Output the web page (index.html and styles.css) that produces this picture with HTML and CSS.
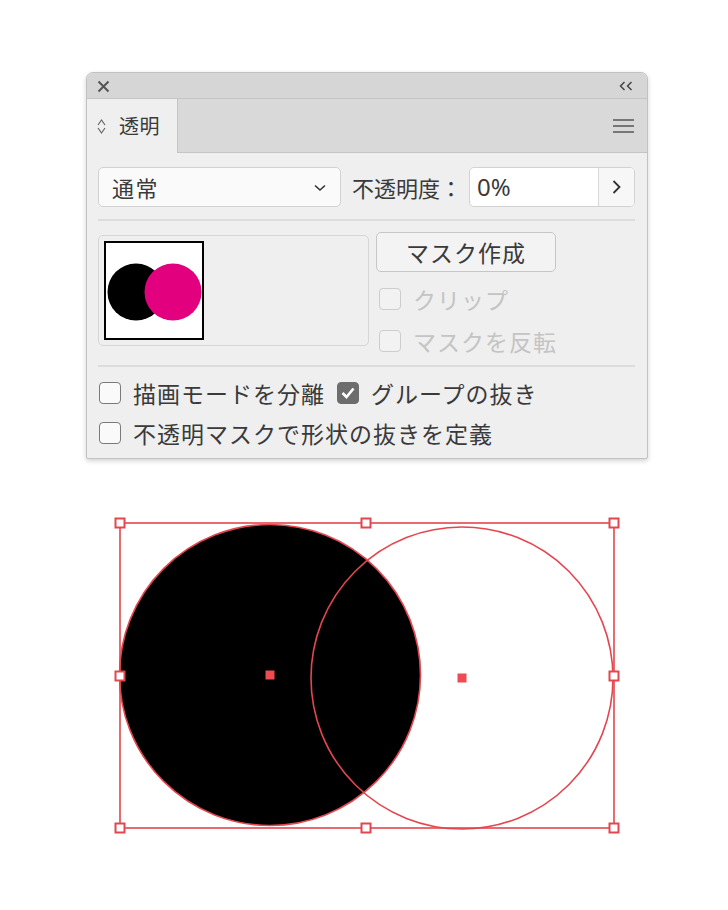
FILE: index.html
```html
<!DOCTYPE html>
<html lang="ja">
<head>
<meta charset="utf-8">
<title>透明</title>
<link rel="stylesheet" href="styles.css">
</head>
<body>
<div class="panel">
  <div class="titlebar">
    <svg class="close" width="13" height="13" viewBox="0 0 13 13"><path d="M1.5 1.5 L11.5 11.5 M11.5 1.5 L1.5 11.5" stroke="#555" stroke-width="2" fill="none"/></svg>
    <svg class="collapse" width="14" height="10" viewBox="0 0 14 10"><path d="M5.5 1 L1.5 5 L5.5 9 M12.5 1 L8.5 5 L12.5 9" stroke="#444" stroke-width="1.5" fill="none"/></svg>
  </div>
  <div class="tabrow">
    <div class="tab">
      <svg class="updown" width="9" height="17" viewBox="0 0 9 17"><path d="M1 7 L4.5 2 L8 7 M1 10 L4.5 15 L8 10" stroke="#666" stroke-width="1.2" fill="none"/></svg>
      <span class="tab-label">透明</span>
    </div>
    <div class="tab-fill">
      <svg class="menu" width="21" height="14" viewBox="0 0 21 14"><path d="M0 1 H21 M0 7 H21 M0 13 H21" stroke="#777" stroke-width="2" fill="none"/></svg>
    </div>
  </div>
  <div class="content">
    <div class="row-blend">
      <div class="select">
        <span>通常</span>
        <svg width="12" height="8" viewBox="0 0 12 8"><path d="M1 1.5 L6 6 L11 1.5" stroke="#333" stroke-width="1.6" fill="none"/></svg>
      </div>
      <span class="opacity-label">不透明度：</span>
      <div class="input">
        <span class="value">0%</span>
        <div class="stepper"><svg width="9" height="14" viewBox="0 0 9 14"><path d="M1.5 1 L7.5 7 L1.5 13" stroke="#333" stroke-width="1.8" fill="none"/></svg></div>
      </div>
    </div>
    <div class="sep"></div>
    <div class="row-mask">
      <div class="preview">
        <div class="thumb">
          <svg width="96" height="95" viewBox="0 0 96 95"><circle cx="30" cy="49" r="28.5" fill="#000"/><circle cx="67" cy="49" r="28.5" fill="#e2007f"/></svg>
        </div>
      </div>
      <div class="mask-side">
        <button class="btn">マスク作成</button>
        <label class="check disabled"><span class="box"></span>クリップ</label>
        <label class="check disabled"><span class="box"></span>マスクを反転</label>
      </div>
    </div>
    <div class="sep sep-low"></div>
    <div class="row-opts">
      <label class="check"><span class="box"></span>描画モードを分離</label>
      <label class="check"><span class="box checked"><svg width="14" height="12" viewBox="0 0 14 12"><path d="M1.5 6 L5.5 10 L12.5 1.5" stroke="#fff" stroke-width="2.6" fill="none"/></svg></span>グループの抜き</label>
    </div>
    <div class="row-opts">
      <label class="check"><span class="box"></span>不透明マスクで形状の抜きを定義</label>
    </div>
  </div>
</div>
<svg class="art" width="728" height="451" viewBox="0 459 728 451">
  <circle cx="270" cy="675" r="150.5" fill="#000" stroke="#e4464f" stroke-width="1.6"/>
  <circle cx="462" cy="678" r="151" fill="none" stroke="#e4464f" stroke-width="1.6"/>
  <rect x="120" y="523" width="494" height="305" fill="none" stroke="#e4464f" stroke-width="1.6"/>
  <g fill="#fff" stroke="#e4464f" stroke-width="2">
    <rect x="115.5" y="518.5" width="9" height="9"/>
    <rect x="361.5" y="518.5" width="9" height="9"/>
    <rect x="609.5" y="518.5" width="9" height="9"/>
    <rect x="115.5" y="671.5" width="9" height="9"/>
    <rect x="609.5" y="671.5" width="9" height="9"/>
    <rect x="115.5" y="823.5" width="9" height="9"/>
    <rect x="361.5" y="823.5" width="9" height="9"/>
    <rect x="609.5" y="823.5" width="9" height="9"/>
  </g>
  <g fill="#f04a52">
    <rect x="265.5" y="670.5" width="9" height="9"/>
    <rect x="457.5" y="673.5" width="9" height="9"/>
  </g>
</svg>
</body>
</html>
```
FILE: styles.css
```css
* { box-sizing: border-box; }
html, body { margin: 0; padding: 0; background: #fff; }
body {
  padding: 72px 0 0 0;
  font-family: "Noto Sans CJK JP", "Noto Sans", sans-serif;
  color: #3a3a3a;
}
.panel {
  margin-left: 86px;
  width: 562px;
  height: 387px;
  border: 1px solid #c2c2c2;
  border-radius: 7px 7px 2px 2px;
  background: #efefef;
  box-shadow: 0 2px 5px rgba(0,0,0,0.18);
  overflow: hidden;
}
.titlebar {
  height: 26px;
  background: #d6d6d6;
  border-bottom: 1px solid #c4c4c4;
  display: flex;
  align-items: center;
  justify-content: space-between;
  padding: 0 14px 0 10px;
}
.close { display: block; margin-top: 1px; }
.collapse { display: block; }
.tabrow {
  height: 54px;
  display: flex;
  background: #d9d9d9;
}
.tab {
  width: 91px;
  background: #efefef;
  border-right: 1px solid #c4c4c4;
  display: flex;
  align-items: center;
  padding-left: 10px;
  gap: 13px;
}
.updown { display: block; }
.tab-label { font-size: 20px; line-height: 1; letter-spacing: 0.5px; color: #3a3a3a; }
.tab-fill {
  flex: 1;
  border-bottom: 1px solid #c4c4c4;
  display: flex;
  align-items: center;
  justify-content: flex-end;
  padding-right: 13px;
}
.menu { display: block; }
.content { padding: 14px 12px 0 11px; }
.row-blend {
  display: flex;
  align-items: center;
  height: 40px;
}
.select {
  width: 243px;
  height: 40px;
  background: #fafafa;
  border: 1px solid #d2d2d2;
  border-radius: 5px;
  display: flex;
  align-items: center;
  justify-content: space-between;
  padding: 0 14px 0 13px;
  font-size: 22px;
}
.select span { letter-spacing: 1.5px; }
.select svg { display: block; margin-top: 2px; }
.opacity-label {
  margin-left: 11px;
  font-size: 22px;
  white-space: nowrap;
}
.input {
  margin-left: 7px;
  flex: 1;
  height: 40px;
  display: flex;
  border: 1px solid #d2d2d2;
  border-radius: 5px;
  background: #fff;
  overflow: hidden;
}
.value {
  flex: 1;
  font-family: "Noto Sans", sans-serif;
  font-size: 24px;
  line-height: 38px;
  padding-left: 7px;
  color: #3a3a3a;
}
.stepper {
  width: 36px;
  border-left: 1px solid #d8d8d8;
  background: #f7f7f7;
  display: flex;
  align-items: center;
  justify-content: center;
}
.sep {
  height: 2px;
  background: #dcdcdc;
  margin: 12px 0 11px 0;
}
.sep.sep-low { margin: 13px 0 6px 0; }
.row-mask {
  display: flex;
  gap: 7px;
  height: 120px;
}
.preview {
  margin-top: 3px;
  width: 271px;
  height: 111px;
  border: 1px solid #d6d6d6;
  border-radius: 5px;
  padding: 5px;
}
.thumb {
  width: 100px;
  height: 99px;
  border: 2px solid #000;
  background: #fff;
}
.thumb svg { display: block; }
.mask-side { display: flex; flex-direction: column; }
.btn {
  width: 180px;
  height: 40px;
  flex: none;
  border: 1.5px solid #c6c6c6;
  border-radius: 5px;
  background: #f3f3f3;
  font-family: "Noto Sans CJK JP", sans-serif;
  font-size: 23px;
  letter-spacing: 1px;
  color: #3a3a3a;
  padding: 0;
  margin-bottom: 6px;
}
.check {
  display: flex;
  align-items: center;
  gap: 12px;
  font-size: 23px;
  letter-spacing: 1px;
  height: 40px;
  white-space: nowrap;
}
.mask-side .check { margin-left: 3px; height: 42px; flex: none; }
.box {
  width: 22px;
  height: 22px;
  border: 1.6px solid #7a7a7a;
  border-radius: 4px;
  background: #fafafa;
  display: flex;
  align-items: center;
  justify-content: center;
  flex: none;
}
.box.checked { background: #6d6d6d; border-color: #6d6d6d; }
.box svg { display: block; }
.check.disabled { color: #c4c4c4; }
.check.disabled .box { border-color: #cdcdcd; background: #f2f2f2; }
.row-opts {
  display: flex;
  gap: 12px;
  margin-left: 1px;
}
.art { display: block; }
```
